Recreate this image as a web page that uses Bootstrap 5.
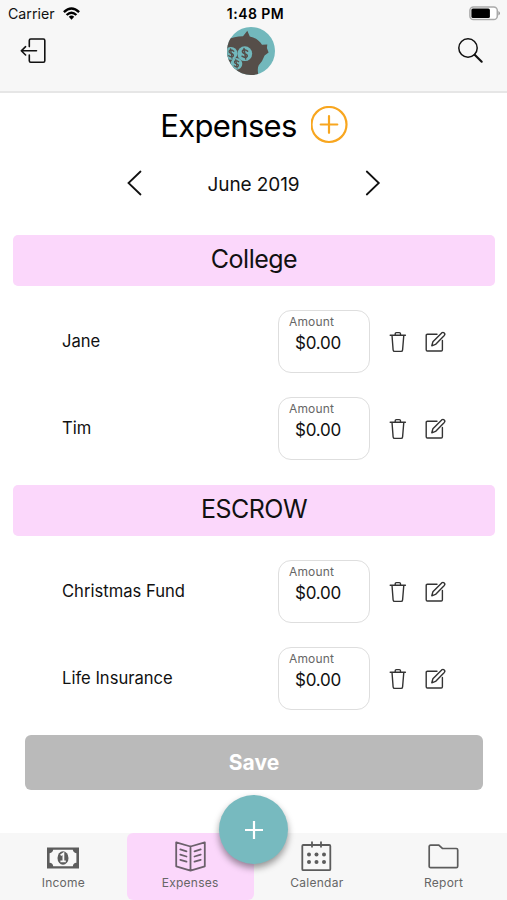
<!DOCTYPE html>
<html lang="en">
<head>
<meta charset="utf-8">
<meta name="viewport" content="width=device-width, initial-scale=1">
<title>Expenses</title>
<link href="https://cdn.jsdelivr.net/npm/bootstrap@5.3.0/dist/css/bootstrap.min.css" rel="stylesheet">
<style>
  body { font-family: Inter, "Liberation Sans", sans-serif; color: #111; background: #fff; line-height: 1.2; }
  svg { display: block; flex: none; }
  .app { height: 900px; overflow: hidden; }
  .topbar { height: 93px; background: #f7f7f7; border-bottom: 2px solid #e6e6e6; }
  .status { height: 27px; font-size: 14.2px; padding: 0 7px 0 8px; }
  .status-time { font-size: 14px; font-weight: 600; letter-spacing: .45px; color: #000; white-space: nowrap; padding-top: 1px; }
  .tools { height: 48px; padding: 0 23px 0 20px; }
  .logo { margin-left: -2.5px; }
  .title-row { height: 63px; padding-left: 2px; gap: 14px; }
  .title { font-size: 31px; font-weight: 400; letter-spacing: -.65px; color: #000; padding-top: 3px; }
  .month-row { height: 54px; padding: 0 126px; }
  .month { font-size: 19px; letter-spacing: -.1px; padding-top: 4px; }
  .groups { padding-top: 25px; }
  .group-title { height: 51px; margin: 0 12px 0 13px; border-radius: 5px; background: #fbd7fb; font-size: 25px; font-weight: 400; letter-spacing: -.5px; color: #111; padding-bottom: 4px; }
  .item { height: 63px; margin: 0 60px 24px 62px; font-size: 16.6px; }
  .item-name { padding-top: 1px; }
  .amount { width: 92px; height: 63px; border: 1px solid #dedede; border-radius: 13px; padding: 3px 0 0 10px; margin-right: 19px; }
  .amount-label { font-size: 12px; letter-spacing: .15px; color: #666; line-height: 15px; }
  .amount-value { font-size: 17px; letter-spacing: -.2px; line-height: 29px; padding-left: 6px; color: #111; }
  .trash { margin-right: 18px; }
  .save { height: 55px; margin: 0 24px 0 25px; background: #bababa; color: #fff; font-size: 21px; font-weight: 700; border: 0; border-radius: 6px; }
  .tabbar { height: 67px; background: #f7f7f7; }
  .tab { width: 25%; color: #666; font-size: 12px; letter-spacing: .25px; text-decoration: none; padding-top: 6px; }
  .tab.current { background: #fbd7fb; border-radius: 6px; }
  .tab-icon { height: 34px; margin-bottom: 3px; }
  .fab { width: 69px; height: 69px; left: 219px; top: -38px; background: #77babf; box-shadow: 0 4px 7px rgba(0,0,0,.4); }
</style>
</head>
<body>
<svg class="d-none" xmlns="http://www.w3.org/2000/svg">
  <symbol id="trash" viewBox="0 0 18 22"><g fill="none" stroke="#333" stroke-width="1.4" stroke-linejoin="round" stroke-linecap="round"><path d="M1.2 4.2H16.4M3 4.2 4.1 18.8Q4.3 20.4 5.6 20.4H12.1Q13.4 20.4 13.6 18.8L14.8 4.2M6.2 4V2.8Q6.2 1.6 7.4 1.6H10.3Q11.5 1.6 11.5 2.8V4"/></g></symbol>
  <symbol id="edit" viewBox="0 0 22 22"><g fill="none" stroke="#333" stroke-width="1.4" stroke-linejoin="round" stroke-linecap="round"><path d="M12 3.2H2.4Q1.2 3.2 1.2 4.4V18.8Q1.2 20 2.4 20H16.2Q17.4 20 17.4 18.8V9.5"/><path d="M6.8 14.8 7.9 10.7 16.7 1.9Q18 .8 19.2 2 20.4 3.2 19.3 4.4L10.5 13.4Z"/></g></symbol>
</svg>
<div class="app d-flex flex-column">
  <header class="topbar flex-shrink-0">
    <div class="status d-flex align-items-center justify-content-between position-relative">
      <div class="d-flex align-items-center gap-2"><span>Carrier</span>
        <svg width="17" height="13" viewBox="0 0 17 13"><g fill="none" stroke="#000" stroke-width="2.4"><path d="M.9 5.1Q8.5-2 16.1 5.1"/><path d="M3.6 8Q8.5 3.4 13.4 8"/></g><path d="M5.8 9.8Q8.5 7.4 11.2 9.8L8.5 12.7Z"/></svg>
      </div>
      <div class="status-time position-absolute start-50 translate-middle-x ps-1">1:48 PM</div>
      <svg width="31" height="15" viewBox="0 0 31 15"><rect x=".9" y="1" width="27.4" height="12.6" rx="3.6" fill="#fff" stroke="#aaa" stroke-width="1.5"/><rect x="2.4" y="2.5" width="18.5" height="9.6" rx="1.5"/><path d="M29.4 5Q31 5.8 31 7.3T29.4 9.6Z" fill="#999"/></svg>
    </div>
    <div class="tools d-flex align-items-center justify-content-between position-relative">
      <svg width="26" height="26" viewBox="0 0 26 26"><g fill="none" stroke="#111" stroke-width="1.6" stroke-linecap="round" stroke-linejoin="round"><path d="M9.3 8.6V2.4Q9.3 1 10.7 1H23.4Q24.8 1 24.8 2.4V22.8Q24.8 24.2 23.4 24.2H10.7Q9.3 24.2 9.3 22.8V17M16.5 12.8H1.3M5.6 8.7 1.3 12.8 5.6 17"/></g></svg>
      <svg class="logo position-absolute start-50 translate-middle-x" width="48" height="48" viewBox="0 0 48 48">
        <clipPath id="disc"><circle cx="24" cy="24" r="24"/></clipPath>
        <g clip-path="url(#disc)"><path fill="#72b8bc" d="M0 0H48V48H0Z"/>
          <path fill="#564e49" d="M-1 13.5Q7 9.2 16 9.3L20.3 3.8 22.8 9.4Q31 11 35 17.8L40.3 17.6 39.9 21 41.6 25.5 37.6 28.5Q36 33.5 31.6 38.5 30 42 31.6 49H-1Z"/>
          <g fill="#72b8bc"><circle cx="17.8" cy="26.7" r="7.4"/><circle cx="4" cy="26.4" r="6.4"/><circle cx="9.4" cy="36.8" r="5.9"/></g>
          <g fill="none" stroke="#564e49" stroke-width="1.5" stroke-linecap="round">
            <path id="coin" d="M20.6 24.2Q17.2 21.6 15.5 23.8 14.8 25.8 17.8 26.7 21 27.7 20.1 29.6 18.4 31.6 15 29.2M17 21.4 18.7 32"/>
            <use href="#coin" transform="translate(-11.4 3) scale(.88)"/>
            <use href="#coin" transform="translate(-4.8 15.4) scale(.8)"/>
          </g>
        </g>
      </svg>
      <svg width="26" height="26" viewBox="0 0 26 26"><g fill="none" stroke="#111"><circle cx="10" cy="10" r="9.2" stroke-width="1.5"/><path d="M16.7 16.7 23.7 23.7" stroke-width="2.1" stroke-linecap="round"/></g></svg>
    </div>
  </header>

  <main class="flex-grow-1">
    <div class="title-row d-flex align-items-center justify-content-center">
      <h1 class="title m-0">Expenses</h1>
      <svg width="38" height="38" viewBox="0 0 38 38"><g fill="none" stroke="#f8a61f" stroke-width="2.2" stroke-linecap="round"><circle cx="18" cy="18.5" r="17.5"/><path d="M9.7 18.5H26.3M18 10.2V26.8"/></g></svg>
    </div>
    <div class="month-row d-flex align-items-center justify-content-between">
      <svg width="16" height="26" viewBox="0 0 16 26"><path d="M14.5 1.5 2.5 13 14.5 24.5" fill="none" stroke="#111" stroke-width="1.8" stroke-linecap="round"/></svg>
      <div class="month">June 2019</div>
      <svg width="16" height="26" viewBox="0 0 16 26"><path d="M1.8 1.5 13.8 13 1.8 24.5" fill="none" stroke="#111" stroke-width="1.8" stroke-linecap="round"/></svg>
    </div>

    <section class="groups">
      <h2 class="group-title d-flex align-items-center justify-content-center mb-4">College</h2>
      <div class="item d-flex align-items-center">
        <span class="item-name me-auto">Jane</span>
        <div class="amount"><div class="amount-label">Amount</div><div class="amount-value">$0.00</div></div>
        <svg class="trash" width="18" height="22"><use href="#trash"/></svg><svg width="22" height="22"><use href="#edit"/></svg>
      </div>
      <div class="item d-flex align-items-center mb-0">
        <span class="item-name me-auto">Tim</span>
        <div class="amount"><div class="amount-label">Amount</div><div class="amount-value">$0.00</div></div>
        <svg class="trash" width="18" height="22"><use href="#trash"/></svg><svg width="22" height="22"><use href="#edit"/></svg>
      </div>
    </section>
    <section class="groups">
      <h2 class="group-title d-flex align-items-center justify-content-center mb-4">ESCROW</h2>
      <div class="item d-flex align-items-center">
        <span class="item-name me-auto">Christmas Fund</span>
        <div class="amount"><div class="amount-label">Amount</div><div class="amount-value">$0.00</div></div>
        <svg class="trash" width="18" height="22"><use href="#trash"/></svg><svg width="22" height="22"><use href="#edit"/></svg>
      </div>
      <div class="item d-flex align-items-center mb-0">
        <span class="item-name me-auto">Life Insurance</span>
        <div class="amount"><div class="amount-label">Amount</div><div class="amount-value">$0.00</div></div>
        <svg class="trash" width="18" height="22"><use href="#trash"/></svg><svg width="22" height="22"><use href="#edit"/></svg>
      </div>
    </section>
    <div class="groups d-grid"><button class="save" type="button">Save</button></div>
  </main>

  <nav class="tabbar d-flex flex-shrink-0 position-relative">
    <a class="tab d-flex flex-column align-items-center" href="#">
      <span class="tab-icon d-flex align-items-center"><svg class="mt-1" width="32" height="22" viewBox="0 0 32 22"><path fill="#5c5c5c" fill-rule="evenodd" d="M0 .5H32V21.5H0ZM6.2 2.8Q5.8 5.8 2.6 6.2V15.8Q5.8 16.2 6.2 19.2H25.8Q26.2 16.2 29.4 15.8V6.2Q26.2 5.8 25.8 2.8Z"/><ellipse cx="16" cy="11" rx="5.5" ry="6.8" fill="#5c5c5c"/><path d="M13.6 8.2 16.4 6.4V14M13.4 14.4H18.8" fill="none" stroke="#f7f7f7" stroke-width="1.8"/></svg></span>
      <span>Income</span>
    </a>
    <a class="tab current d-flex flex-column align-items-center" href="#">
      <span class="tab-icon d-flex align-items-center"><svg width="31" height="31" viewBox="0 0 31 31"><g fill="none" stroke="#6b606b" stroke-width="1.8" stroke-linejoin="round" stroke-linecap="round"><path d="M15.5 5.5 1.2 1.3V25.3L15.5 29.6 29.8 25.3V1.3ZM15.5 5.5V29.6M5.3 8.4 11.5 10.3M5.3 13.6 11.5 15.5M5.3 18.8 11.5 20.7M25.7 8.4 19.5 10.3M25.7 13.6 19.5 15.5M25.7 18.8 19.5 20.7"/></g></svg></span>
      <span>Expenses</span>
    </a>
    <a class="tab d-flex flex-column align-items-center" href="#">
      <span class="tab-icon d-flex align-items-center"><svg width="31" height="31" viewBox="0 0 31 31"><g fill="none" stroke="#5c5c5c" stroke-width="1.8"><rect x="1.3" y="4" width="28" height="25.2" rx="1"/><path d="M11 .5V6.5M20 .5V6.5"/></g><g fill="#5c5c5c"><circle cx="8" cy="13.4" r="2"/><circle cx="15.5" cy="13.4" r="2"/><circle cx="23" cy="13.4" r="2"/><circle cx="8" cy="20.9" r="2"/><circle cx="15.5" cy="20.9" r="2"/><circle cx="23" cy="20.9" r="2"/></g></svg></span>
      <span>Calendar</span>
    </a>
    <a class="tab d-flex flex-column align-items-center" href="#">
      <span class="tab-icon d-flex align-items-center"><svg width="31" height="25" viewBox="0 0 31 25"><path d="M2.6 1.2H10.8L14.4 4.5H28.3Q29.7 4.5 29.7 5.9V22.2Q29.7 23.6 28.3 23.6H2.6Q1.2 23.6 1.2 22.2V2.6Q1.2 1.2 2.6 1.2Z" fill="none" stroke="#5c5c5c" stroke-width="1.7"/></svg></span>
      <span>Report</span>
    </a>
    <button class="fab btn rounded-circle position-absolute border-0 p-0 d-flex align-items-center justify-content-center" type="button" aria-label="Add">
      <svg width="20" height="20" viewBox="0 0 20 20"><path d="M1 10H19M10 1V19" stroke="#fff" stroke-width="2.2"/></svg>
    </button>
  </nav>
</div>
<script src="https://cdn.jsdelivr.net/npm/bootstrap@5.3.0/dist/js/bootstrap.bundle.min.js"></script>
</body>
</html>
